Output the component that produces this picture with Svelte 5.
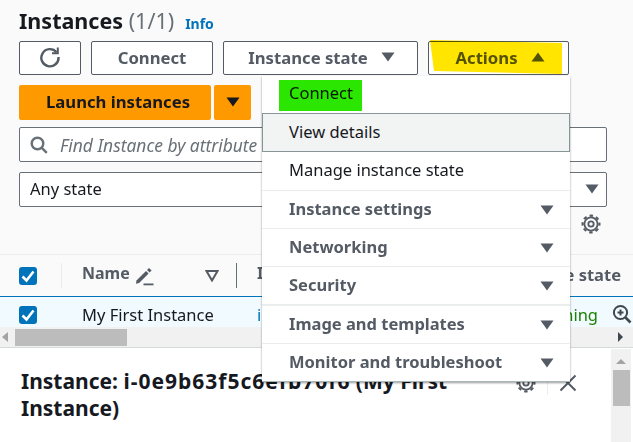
<script lang="ts">
	const menuItems = [
		{ label: 'Connect', plain: true, mark: true },
		{ label: 'View details', plain: true, hover: true },
		{ label: 'Manage instance state', plain: true },
		{ label: 'Instance settings' },
		{ label: 'Networking' },
		{ label: 'Security' },
		{ label: 'Image and templates', thick: true },
		{ label: 'Monitor and troubleshoot', last: true }
	];
</script>

{#snippet caret(cls = '')}
	<svg class="caret {cls}" width="14" height="10" viewBox="0 0 14 10"><path d="M0.5 0.5h13L7 9.5z" /></svg>
{/snippet}

{#snippet check()}
	<span class="check">
		<svg width="18" height="18" viewBox="0 0 18 18"><path d="M3.5 9.5l4 4 7-9" fill="none" stroke="#fff" stroke-width="2.6" /></svg>
	</span>
{/snippet}

{#snippet gear()}
	<svg width="20" height="20" viewBox="0 0 20 20" fill="none" stroke="#545b64">
		<circle cx="10" cy="10" r="2.7" stroke-width="1.8" />
		<circle cx="10" cy="10" r="6.6" stroke-width="1.8" />
		<circle cx="10" cy="10" r="8.4" stroke-width="2.2" stroke-dasharray="3.4 3.2" stroke-dashoffset="1.7" />
	</svg>
{/snippet}

<main class="page">
	<section class="top">
		<header class="title">
			<h1>Instances <span class="count">(1/1)</span></h1>
			<a href="#info">Info</a>
		</header>

		<div class="toolbar">
			<button class="btn refresh" aria-label="Refresh">
				<svg width="22" height="22" viewBox="0 0 22 22" fill="none" stroke="#545b64" stroke-width="2.4">
					<path d="M17.5 6.2A8.6 8.6 0 1 0 19.5 11" />
					<path d="M18.8 1.5v5.8h-5.8" stroke-width="2" />
				</svg>
			</button>
			<button class="btn connect">Connect</button>
			<button class="btn state">Instance state {@render caret()}</button>
			<button class="btn actions">
				Actions
				<svg class="caret" width="14" height="10" viewBox="0 0 14 10"><path d="M0.5 9.5h13L7 0.5z" /></svg>
				<span class="yellow"></span>
			</button>
		</div>

		<div class="launch">
			<button class="primary main">Launch instances</button>
			<button class="primary side" aria-label="More">{@render caret('dark')}</button>
		</div>

		<div class="field search">
			<svg width="18" height="18" viewBox="0 0 18 18" fill="none" stroke="#687078" stroke-width="2.4">
				<circle cx="7.5" cy="7.5" r="5.8" /><path d="M11.8 11.8l5 5" />
			</svg>
			<span>Find Instance by attribute or tag</span>
		</div>

		<div class="field select">
			<span>Any state</span>
			{@render caret()}
		</div>

		<div class="settings">{@render gear()}</div>
	</section>

	<section class="table">
		<div class="thead">
			<div class="cell-check">{@render check()}</div>
			<span class="sep light"></span>
			<div class="name-head">
				<strong>Name</strong>
				<svg width="20" height="20" viewBox="0 0 20 20" fill="#545b64">
					<path d="M1.5 14.5l9.5-9.5 2.6 2.6-9.5 9.5-3.2.7z" />
					<path d="M12 4l2-2 2.6 2.6-2 2z" />
					<path d="M8.5 17.5h10v1.8h-10z" />
				</svg>
				<svg class="filter" width="14" height="12" viewBox="0 0 14 12"><path d="M1.5 1h11L7 10.5z" fill="none" stroke="#545b64" stroke-width="2" /></svg>
			</div>
			<span class="sep"></span>
			<strong class="id-head">I</strong>
			<strong class="state-head">Instance state</strong>
		</div>
		<div class="row">
			<div class="cell-check">{@render check()}</div>
			<span class="row-name">My First Instance</span>
			<a class="row-id" href="#id">i-0e9b63f5c6</a>
			<span class="row-state">Running</span>
			<svg class="zoom" width="20" height="20" viewBox="0 0 20 20" fill="none" stroke="#414750" stroke-width="2">
				<circle cx="8.5" cy="8.5" r="6.6" /><path d="M13.5 13.5l5 5" stroke-width="2.6" /><path d="M5.5 8.5h6M8.5 5.5v6" />
			</svg>
		</div>
		<div class="hscroll">
			<i class="arrow left"></i>
			<span class="thumb"></span>
			<i class="arrow right"></i>
		</div>
	</section>

	<section class="detail">
		<h2>Instance: <span class="instance-id">i-0e9b63f5c6efb70f6</span> (My First Instance)</h2>
		<div class="detail-tools">
			{@render gear()}
			<span class="tool-sep"></span>
			<svg width="18" height="18" viewBox="0 0 18 18" stroke="#545b64" stroke-width="2"><path d="M1.5 1.5l15 15M16.5 1.5l-15 15" /></svg>
		</div>
		<div class="vscroll">
			<i class="arrow up"></i>
			<span class="vthumb"></span>
		</div>
	</section>

	<ul class="menu">
		{#each menuItems as item}
			<li class:plain={item.plain} class:hover={item.hover} class:thick={item.thick} class:last={item.last}>
				<span class="item-label">{item.label}</span>
				{#if item.mark}<span class="green"></span>{/if}
				{#if !item.plain}{@render caret()}{/if}
			</li>
		{/each}
	</ul>
</main>

<style>
	:global(body) {
		margin: 0;
		background: #fff;
	}

	.page {
		position: relative;
		width: 633px;
		height: 442px;
		overflow: hidden;
		font-family: 'Noto Sans', 'Open Sans', sans-serif;
		font-size: 16.5px;
		color: #16191f;
		display: flex;
		flex-direction: column;
	}

	.top {
		position: relative;
		height: 254px;
		box-sizing: border-box;
		padding: 0 26px 0 19px;
		background: #fafafa;
		display: flex;
		flex-direction: column;
	}

	.title {
		display: flex;
		align-items: baseline;
		gap: 11px;
		height: 41px;
		padding-top: 6px;
		box-sizing: border-box;
	}

	h1 {
		margin: 0;
		font-size: 21.5px;
		font-weight: 700;
		line-height: 30px;
	}

	.count {
		font-weight: 400;
		color: #687078;
	}

	.title a {
		font-size: 14px;
		font-weight: 700;
		color: #0073bb;
		text-decoration: none;
	}

	.toolbar {
		display: flex;
		gap: 10px;
		height: 34px;
	}

	button {
		font: inherit;
		cursor: pointer;
	}

	.btn {
		position: relative;
		box-sizing: border-box;
		height: 34px;
		padding: 0 0 2px;
		background: #fff;
		border: 1px solid #545b64;
		border-radius: 2px;
		color: #545b64;
		font-size: 16.7px;
		font-weight: 700;
		display: flex;
		align-items: center;
		justify-content: center;
		gap: 13px;
	}

	.refresh { width: 62px; }
	.connect { width: 122px; }
	.state { width: 195px; padding-left: 2px; }
	.actions { width: 141px; padding-left: 3px; }

	.caret {
		flex: none;
	}

	.caret path {
		fill: #545b64;
	}

	.caret.dark path {
		fill: #16191f;
	}

	.yellow {
		position: absolute;
		left: 1px;
		top: -2px;
		width: 132px;
		height: 34px;
		background: #ffe500;
		mix-blend-mode: multiply;
		clip-path: polygon(0 0, 100% 3px, 100% 100%, 4px 31px);
	}

	.launch {
		display: flex;
		gap: 3px;
		margin-top: 10px;
		height: 35px;
	}

	.primary {
		border: 0;
		border-radius: 2px;
		background: #ff9900;
		color: #16191f;
		font-size: 16.7px;
		font-weight: 700;
		padding: 0 0 2px;
		display: flex;
		align-items: center;
		justify-content: center;
	}

	.main { width: 192px; padding-left: 6px; }
	.side { width: 37px; }

	.field {
		box-sizing: border-box;
		display: flex;
		align-items: center;
		height: 35px;
		background: #fff;
		border: 1px solid #687078;
		border-radius: 2px;
	}

	.search {
		margin-top: 7px;
		padding-left: 10px;
		gap: 12px;
		color: #687078;
		font-size: 17.4px;
		font-style: italic;
	}

	.select {
		margin-top: 10px;
		padding: 0 7px 2px 10px;
		justify-content: space-between;
		color: #16191f;
	}

	.settings {
		position: absolute;
		left: 581px;
		top: 214px;
		line-height: 0;
	}

	.table {
		height: 94px;
		background: #fff;
		border-top: 1px solid #eaeded;
		border-bottom: 1px solid #d5dbdb;
		box-sizing: border-box;
		display: flex;
		flex-direction: column;
	}

	.thead {
		display: flex;
		align-items: center;
		height: 42px;
		background: #fafafa;
		border-bottom: 1px solid #0073bb;
		box-sizing: border-box;
		color: #545b64;
		font-size: 16px;
	}

	.name-head strong,
	.id-head {
		margin-bottom: 5px;
	}

	.cell-check {
		width: 61px;
		padding-left: 19px;
		box-sizing: border-box;
		line-height: 0;
		flex: none;
	}

	.check {
		display: inline-block;
		width: 18px;
		height: 18px;
		background: #0073bb;
		border-radius: 3px;
	}

	.sep {
		width: 1px;
		height: 25px;
		background: #687078;
		flex: none;
	}

	.sep.light {
		background: #eaeded;
	}

	.name-head {
		display: flex;
		align-items: center;
		width: 174px;
		padding-left: 20px;
		box-sizing: border-box;
		gap: 5px;
		flex: none;
	}

	.name-head .filter {
		margin-left: auto;
		margin-right: 17px;
	}

	.id-head {
		margin-left: 20px;
	}

	.state-head {
		margin-left: auto;
		margin-right: 12px;
		margin-bottom: 3px;
		font-size: 16.5px;
	}

	.row {
		position: relative;
		display: flex;
		align-items: center;
		height: 30px;
		padding-top: 6px;
		box-sizing: border-box;
		background: #f1faff;
	}

	.row-name {
		margin-left: 21px;
		margin-bottom: 2px;
		width: 175px;
	}

	.row-id {
		margin-bottom: 2px;
		color: #0073bb;
		text-decoration: none;
	}

	.row-state {
		margin-left: auto;
		margin-right: 35px;
		margin-bottom: 2px;
		color: #1d8102;
	}

	.zoom {
		position: absolute;
		left: 612px;
		top: 7px;
	}

	.hscroll {
		display: flex;
		align-items: center;
		height: 20px;
		background: #f1f1f1;
	}

	.thumb {
		width: 112px;
		height: 17px;
		margin-left: 7px;
		background: #bcbcbc;
	}

	.arrow {
		width: 0;
		height: 0;
		border-style: solid;
		border-color: transparent;
		flex: none;
	}

	.arrow.left {
		margin-left: 2px;
		border-width: 5px 6px 5px 0;
		border-right-color: #a3a3a3;
	}

	.arrow.right {
		margin-left: auto;
		margin-right: 10px;
		border-width: 5px 0 5px 5px;
		border-left-color: #414750;
	}

	.detail {
		position: relative;
		flex: 1;
		background: #fff;
		padding: 20px 150px 0 21px;
	}

	h2 {
		margin: 0;
		font-size: 21px;
		font-weight: 700;
		line-height: 27px;
	}

	.instance-id {
		letter-spacing: 1px;
	}

	.detail-tools {
		position: absolute;
		left: 516px;
		top: 23px;
		display: flex;
		align-items: center;
		gap: 11px;
		line-height: 0;
	}

	.tool-sep {
		width: 1px;
		height: 24px;
		background: #eaeded;
	}

	.vscroll {
		position: absolute;
		right: 2px;
		top: 1px;
		bottom: 0;
		width: 20px;
		background: #f1f1f1;
		display: flex;
		flex-direction: column;
		align-items: center;
	}

	.arrow.up {
		margin-top: 10px;
		border-width: 0 5px 5px 5px;
		border-bottom-color: #a3a3a3;
	}

	.vthumb {
		width: 17px;
		height: 36px;
		margin-top: 6px;
		background: #bcbcbc;
	}

	.menu {
		position: absolute;
		left: 262px;
		top: 76px;
		width: 308px;
		box-sizing: border-box;
		margin: 0;
		padding: 0;
		list-style: none;
		background: #fff;
		box-shadow: 0 1px 2px rgba(0, 0, 0, 0.4);
		font-weight: 700;
		color: #545b64;
	}

	.menu li {
		position: relative;
		box-sizing: border-box;
		display: flex;
		align-items: center;
		justify-content: space-between;
		height: 38px;
		padding: 0 16px 0 27px;
		border-top: 1px solid #eaeded;
	}

	.item-label {
		margin-bottom: 2px;
	}

	.menu li.plain {
		font-weight: 400;
		color: #16191f;
		border-top: 0;
	}

	.menu li.plain:first-child {
		height: 37px;
		align-items: flex-start;
		padding-top: 5px;
	}

	.menu li.hover {
		height: 39px;
		background: #f2f3f3;
		border: 1px solid #879596;
		padding-left: 26px;
	}

	.menu li.hover + .plain .item-label {
		margin-bottom: 3px;
	}

	.menu li.thick {
		height: 39px;
		border-top-width: 2px;
	}

	.menu li.thick .item-label {
		margin-bottom: 3px;
	}

	.menu li.last {
		height: 39px;
		border-bottom: 1px solid #aab7b8;
	}

	.green {
		position: absolute;
		left: 17px;
		top: 4px;
		width: 83px;
		height: 31px;
		background: #2ae600;
		mix-blend-mode: multiply;
	}
</style>
